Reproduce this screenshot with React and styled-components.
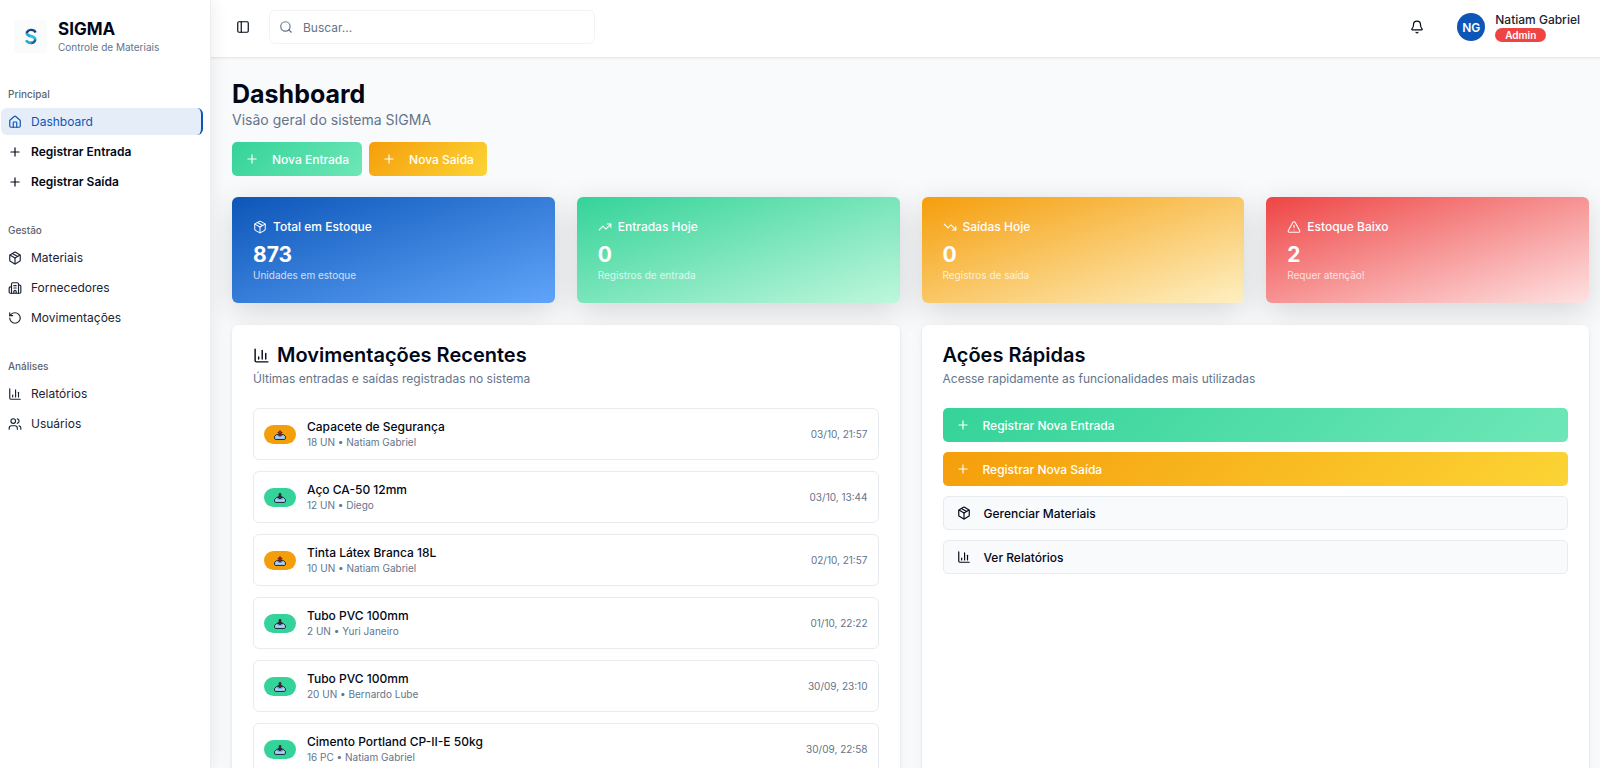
import React from "react";
import styled, { createGlobalStyle, css } from "styled-components";
import {
  Bell,
  Building2,
  ChartColumn,
  House,
  Package,
  PanelLeft,
  Plus,
  RotateCcw,
  Search,
  TrendingDown,
  TrendingUp,
  TriangleAlert,
  Users,
} from "lucide-react";

const color = {
  ink: "#020817",
  text: "#1b2433",
  muted: "#64748b",
  primary: "#0d56b8",
  border: "#e8ebef",
  canvas: "#f9fafc",
};

const gradients = {
  entrada: "linear-gradient(135deg, #34d399, #6ee7b7)",
  saida: "linear-gradient(135deg, #f59e0b, #fcd435)",
};

const GlobalStyle = createGlobalStyle`
  *, *::before, *::after { box-sizing: border-box; }
  body {
    margin: 0;
    font-family: Inter, "Liberation Sans", sans-serif;
    font-size: 12px;
    color: ${color.ink};
    background: ${color.canvas};
  }
  h1, h2, h3, p, ul { margin: 0; padding: 0; }
  ul { list-style: none; }
  button, input { font: inherit; }
  button { cursor: pointer; }
`;

const Shell = styled.div`
  display: flex;
  height: 100vh;
  overflow: hidden;
`;

const Sidebar = styled.aside`
  position: relative;
  z-index: 3;
  flex: none;
  width: 211px;
  background: #fff;
  border-right: 1px solid #eceef0;
  box-shadow: 2px 0 16px rgba(0, 0, 0, 0.07);
`;

const Brand = styled.div`
  display: flex;
  align-items: center;
  gap: 11px;
  padding: 18px 14px 26px;
`;

const LogoTile = styled.div`
  display: grid;
  place-items: center;
  width: 33px;
  height: 33px;
  background: #fafbfb;
`;

const BrandName = styled.p`
  font-size: 17px;
  line-height: 22px;
  font-weight: 700;
`;

const BrandNote = styled.p`
  font-size: 10px;
  line-height: 14px;
  color: ${color.muted};
`;

const Nav = styled.nav`
  display: flex;
  flex-direction: column;
  gap: 21px;
  padding: 0 7px 0 1px;
`;

const NavLabel = styled.h3`
  padding-left: 7px;
  font-size: 10px;
  line-height: 28px;
  font-weight: 500;
  color: #5b6470;
`;

const NavList = styled.ul`
  display: flex;
  flex-direction: column;
  gap: 3px;
`;

const NavLink = styled.a`
  display: flex;
  align-items: center;
  gap: 9px;
  height: 27px;
  padding: 0 7px;
  border-radius: 6px;
  border-right: 2px solid transparent;
  color: ${color.text};
  font-weight: ${(p) => (p.$strong ? 600 : 400)};
  text-decoration: none;
  ${(p) =>
    p.$strong &&
    css`
      color: ${color.ink};
    `}
  ${(p) =>
    p.$active &&
    css`
      color: ${color.primary};
      background: #e5edf8;
      border-right-color: ${color.primary};
    `}
`;

const Column = styled.div`
  display: flex;
  flex: 1;
  flex-direction: column;
  min-width: 0;
`;

const Header = styled.header`
  position: relative;
  z-index: 2;
  display: flex;
  flex: none;
  align-items: center;
  height: 58px;
  padding: 0 20px 3px 18px;
  background: #fff;
  border-bottom: 1px solid #e6e9ea;
  box-shadow: 0 1px 2px rgba(0, 0, 0, 0.05);
`;

const IconButton = styled.button`
  display: grid;
  place-items: center;
  width: 28px;
  height: 28px;
  padding: 0;
  border: 0;
  border-radius: 6px;
  background: transparent;
  color: ${color.ink};
`;

const SearchBox = styled.label`
  display: flex;
  align-items: center;
  gap: 10px;
  width: 326px;
  height: 34px;
  margin-left: 12px;
  padding: 0 9px;
  border: 1px solid #f1f3f5;
  border-radius: 6px;
  color: ${color.muted};
`;

const SearchInput = styled.input`
  flex: 1;
  min-width: 0;
  padding: 0;
  border: 0;
  outline: 0;
  background: transparent;
  color: ${color.ink};
  &::placeholder {
    color: ${color.muted};
    opacity: 1;
  }
`;

const UserArea = styled.div`
  display: flex;
  align-items: center;
  margin-left: auto;
`;

const Avatar = styled.div`
  display: grid;
  place-items: center;
  width: 28px;
  height: 28px;
  margin: 0 10px 0 26px;
  border-radius: 50%;
  background: ${color.primary};
  color: #fff;
  font-weight: 600;
`;

const UserName = styled.p`
  line-height: 16px;
  font-weight: 500;
  color: ${color.text};
`;

const RoleBadge = styled.span`
  display: block;
  width: fit-content;
  padding: 0 10px;
  border-radius: 7px;
  background: #ef4444;
  color: #fff;
  font-size: 10px;
  line-height: 14px;
  font-weight: 600;
`;

const Main = styled.main`
  flex: 1;
  min-height: 0;
  overflow: auto;
  scrollbar-width: none;
  padding: 21px 11px 21px 21px;
`;

const PageTitle = styled.h1`
  font-size: 25px;
  line-height: 30px;
  font-weight: 700;
`;

const PageNote = styled.p`
  font-size: 14px;
  line-height: 22px;
  color: ${color.muted};
`;

const ActionRow = styled.div`
  display: flex;
  gap: 7px;
  margin: 11px 0 21px;
`;

const ActionButton = styled.button`
  display: flex;
  align-items: center;
  gap: 13px;
  height: 34px;
  padding: 0 13px;
  border: ${(p) => (p.$kind ? "0" : `1px solid ${color.border}`)};
  border-radius: 5px;
  background: ${(p) => gradients[p.$kind] || color.canvas};
  color: ${(p) => (p.$kind ? "#fff" : color.ink)};
  font-weight: 500;
`;

const StatGrid = styled.section`
  display: grid;
  grid-template-columns: repeat(4, 1fr);
  gap: 22px;
`;

const StatCard = styled.article`
  padding: 21px;
  border-radius: 6px;
  background: linear-gradient(to bottom right, ${(p) => p.$from}, ${(p) => p.$to});
  box-shadow: 0 8px 32px rgba(0, 0, 0, 0.15);
  color: #fff;
`;

const StatTitle = styled.h3`
  display: flex;
  align-items: center;
  gap: 6px;
  margin-bottom: 6px;
  font-size: 12px;
  line-height: 18px;
  font-weight: 500;
`;

const StatValue = styled.p`
  font-size: 21px;
  line-height: 26px;
  font-weight: 700;
`;

const StatNote = styled.p`
  font-size: 10px;
  line-height: 14px;
  opacity: 0.75;
`;

const PanelGrid = styled.div`
  display: grid;
  grid-template-columns: repeat(2, 1fr);
  gap: 22px;
  margin-top: 22px;
`;

const Panel = styled.section`
  position: relative;
  padding: 20px 21px;
  border-radius: 6px;
  background: #fff;
  box-shadow: 0 1px 3px rgba(0, 0, 0, 0.1), 0 4px 16px rgba(0, 0, 0, 0.04);
`;

const PanelTitle = styled.h2`
  display: flex;
  align-items: center;
  gap: 7px;
  font-size: 20px;
  line-height: 20px;
  font-weight: 600;
`;

const PanelNote = styled.p`
  margin: 6px 0 21px;
  line-height: 16px;
  color: ${color.muted};
`;

const Stack = styled.div`
  display: flex;
  flex-direction: column;
  gap: 10px;
`;

const MovementList = styled.ul`
  display: flex;
  flex-direction: column;
  gap: 11px;
`;

const Movement = styled.li`
  display: flex;
  align-items: center;
  gap: 11px;
  height: 52px;
  padding: 0 10px;
  border: 1px solid ${color.border};
  border-radius: 6px;
`;

const TrayBadge = styled.span`
  display: grid;
  place-items: center;
  width: 32px;
  height: 19px;
  padding-top: 2px;
  border-radius: 10px;
  background: ${(p) => (p.$out ? "#f59e0b" : "#34d399")};
`;

const MovementText = styled.div`
  flex: 1;
  min-width: 0;
`;

const MovementName = styled.p`
  line-height: 16px;
  font-weight: 500;
`;

const Small = styled.p`
  font-size: 10px;
  line-height: 14px;
  color: ${color.muted};
`;

const Logo = () => (
  <svg width="14" height="17" viewBox="0 0 14 17" fill="none" aria-hidden="true">
    <path d="M11.6 4.4C10.7 2.5 8.8 1.8 6.8 1.9 4.4 2 2.6 3.6 2.8 5.5" stroke="#17447f" strokeWidth="2.4" />
    <path d="M2.8 5.2C3.1 7.2 5 7.6 7 8.3" stroke="#2ba3d8" strokeWidth="2.8" />
    <path d="M6.2 7.9C8.6 8.7 11.1 9.2 11.2 11.4" stroke="#2bc0dc" strokeWidth="2.8" />
    <path d="M11.2 11.2C11.3 13.6 9.4 14.9 7 14.9" stroke="#16629f" strokeWidth="2.6" />
    <path d="M7.6 14.9C5.2 15 3.1 14.1 2.2 12.2" stroke="#28a5cf" strokeWidth="2.6" />
  </svg>
);

const Tray = ({ out }) => (
  <svg width="12" height="10" viewBox="0 0 12 10" aria-hidden="true">
    <path
      d="M2.4 4.7h7.2l1.8 1.7v2a1 1 0 0 1-1 1H1.6a1 1 0 0 1-1-1v-2z"
      fill="#a9d2f8"
      stroke="#17202c"
      strokeWidth="1"
    />
    <path d="M3.6 5.2h4.8v1.4H3.6z" fill="#5b8fc4" />
    {out ? (
      <path d="M6 .5 8.2 3H6.9v2.8H5.1V3H3.8z" fill="#c5242f" stroke="#25151a" strokeWidth=".7" />
    ) : (
      <path d="M6 6 3.8 3.6h1.3V.6h1.8v3h1.3z" fill="#5c1d2b" stroke="#17202c" strokeWidth=".7" />
    )}
  </svg>
);

const navGroups = [
  {
    label: "Principal",
    items: [
      { icon: House, text: "Dashboard", active: true },
      { icon: Plus, text: "Registrar Entrada", strong: true },
      { icon: Plus, text: "Registrar Saída", strong: true },
    ],
  },
  {
    label: "Gestão",
    items: [
      { icon: Package, text: "Materiais" },
      { icon: Building2, text: "Fornecedores" },
      { icon: RotateCcw, text: "Movimentações" },
    ],
  },
  {
    label: "Análises",
    items: [
      { icon: ChartColumn, text: "Relatórios" },
      { icon: Users, text: "Usuários" },
    ],
  },
];

const stats = [
  { icon: Package, title: "Total em Estoque", value: "873", note: "Unidades em estoque", from: "#0d56b8", to: "#60a5fa" },
  { icon: TrendingUp, title: "Entradas Hoje", value: "0", note: "Registros de entrada", from: "#34d399", to: "#bff7dc" },
  { icon: TrendingDown, title: "Saídas Hoje", value: "0", note: "Registros de saída", from: "#f59e0b", to: "#fef0c3" },
  { icon: TriangleAlert, title: "Estoque Baixo", value: "2", note: "Requer atenção!", from: "#ef4444", to: "#fee2e2" },
];

const movements = [
  { out: true, name: "Capacete de Segurança", detail: "18 UN • Natiam Gabriel", date: "03/10, 21:57" },
  { out: false, name: "Aço CA-50 12mm", detail: "12 UN • Diego", date: "03/10, 13:44" },
  { out: true, name: "Tinta Látex Branca 18L", detail: "10 UN • Natiam Gabriel", date: "02/10, 21:57" },
  { out: false, name: "Tubo PVC 100mm", detail: "2 UN • Yuri Janeiro", date: "01/10, 22:22" },
  { out: false, name: "Tubo PVC 100mm", detail: "20 UN • Bernardo Lube", date: "30/09, 23:10" },
  { out: false, name: "Cimento Portland CP-II-E 50kg", detail: "16 PC • Natiam Gabriel", date: "30/09, 22:58" },
];

export default function App() {
  return (
    <>
      <GlobalStyle />
      <Shell>
        <Sidebar>
          <Brand>
            <LogoTile>
              <Logo />
            </LogoTile>
            <div>
              <BrandName>SIGMA</BrandName>
              <BrandNote>Controle de Materiais</BrandNote>
            </div>
          </Brand>
          <Nav aria-label="Menu">
            {navGroups.map((group) => (
              <div key={group.label}>
                <NavLabel>{group.label}</NavLabel>
                <NavList>
                  {group.items.map(({ icon: Icon, text, active, strong }) => (
                    <li key={text}>
                      <NavLink href="#" $active={active} $strong={strong}>
                        <Icon size={14} />
                        {text}
                      </NavLink>
                    </li>
                  ))}
                </NavList>
              </div>
            ))}
          </Nav>
        </Sidebar>

        <Column>
          <Header>
            <IconButton aria-label="Alternar menu">
              <PanelLeft size={14} />
            </IconButton>
            <SearchBox>
              <Search size={14} />
              <SearchInput type="text" placeholder="Buscar..." aria-label="Buscar" />
            </SearchBox>
            <UserArea>
              <IconButton aria-label="Notificações">
                <Bell size={14} />
              </IconButton>
              <Avatar>NG</Avatar>
              <div>
                <UserName>Natiam Gabriel</UserName>
                <RoleBadge>Admin</RoleBadge>
              </div>
            </UserArea>
          </Header>

          <Main>
            <PageTitle>Dashboard</PageTitle>
            <PageNote>Visão geral do sistema SIGMA</PageNote>
            <ActionRow>
              <ActionButton $kind="entrada">
                <Plus size={14} />
                Nova Entrada
              </ActionButton>
              <ActionButton $kind="saida">
                <Plus size={14} />
                Nova Saída
              </ActionButton>
            </ActionRow>

            <StatGrid>
              {stats.map(({ icon: Icon, title, value, note, from, to }) => (
                <StatCard key={title} $from={from} $to={to}>
                  <StatTitle>
                    <Icon size={14} strokeWidth={1.75} />
                    {title}
                  </StatTitle>
                  <StatValue>{value}</StatValue>
                  <StatNote>{note}</StatNote>
                </StatCard>
              ))}
            </StatGrid>

            <PanelGrid>
              <Panel>
                <PanelTitle>
                  <ChartColumn size={17} />
                  Movimentações Recentes
                </PanelTitle>
                <PanelNote>Últimas entradas e saídas registradas no sistema</PanelNote>
                <MovementList>
                  {movements.map((m) => (
                    <Movement key={m.date}>
                      <TrayBadge $out={m.out}>
                        <Tray out={m.out} />
                      </TrayBadge>
                      <MovementText>
                        <MovementName>{m.name}</MovementName>
                        <Small>{m.detail}</Small>
                      </MovementText>
                      <Small>{m.date}</Small>
                    </Movement>
                  ))}
                </MovementList>
              </Panel>

              <Panel>
                <PanelTitle>Ações Rápidas</PanelTitle>
                <PanelNote>Acesse rapidamente as funcionalidades mais utilizadas</PanelNote>
                <Stack>
                  <ActionButton $kind="entrada">
                    <Plus size={14} />
                    Registrar Nova Entrada
                  </ActionButton>
                  <ActionButton $kind="saida">
                    <Plus size={14} />
                    Registrar Nova Saída
                  </ActionButton>
                  <ActionButton>
                    <Package size={14} />
                    Gerenciar Materiais
                  </ActionButton>
                  <ActionButton>
                    <ChartColumn size={14} />
                    Ver Relatórios
                  </ActionButton>
                </Stack>
              </Panel>
            </PanelGrid>
          </Main>
        </Column>
      </Shell>
    </>
  );
}
